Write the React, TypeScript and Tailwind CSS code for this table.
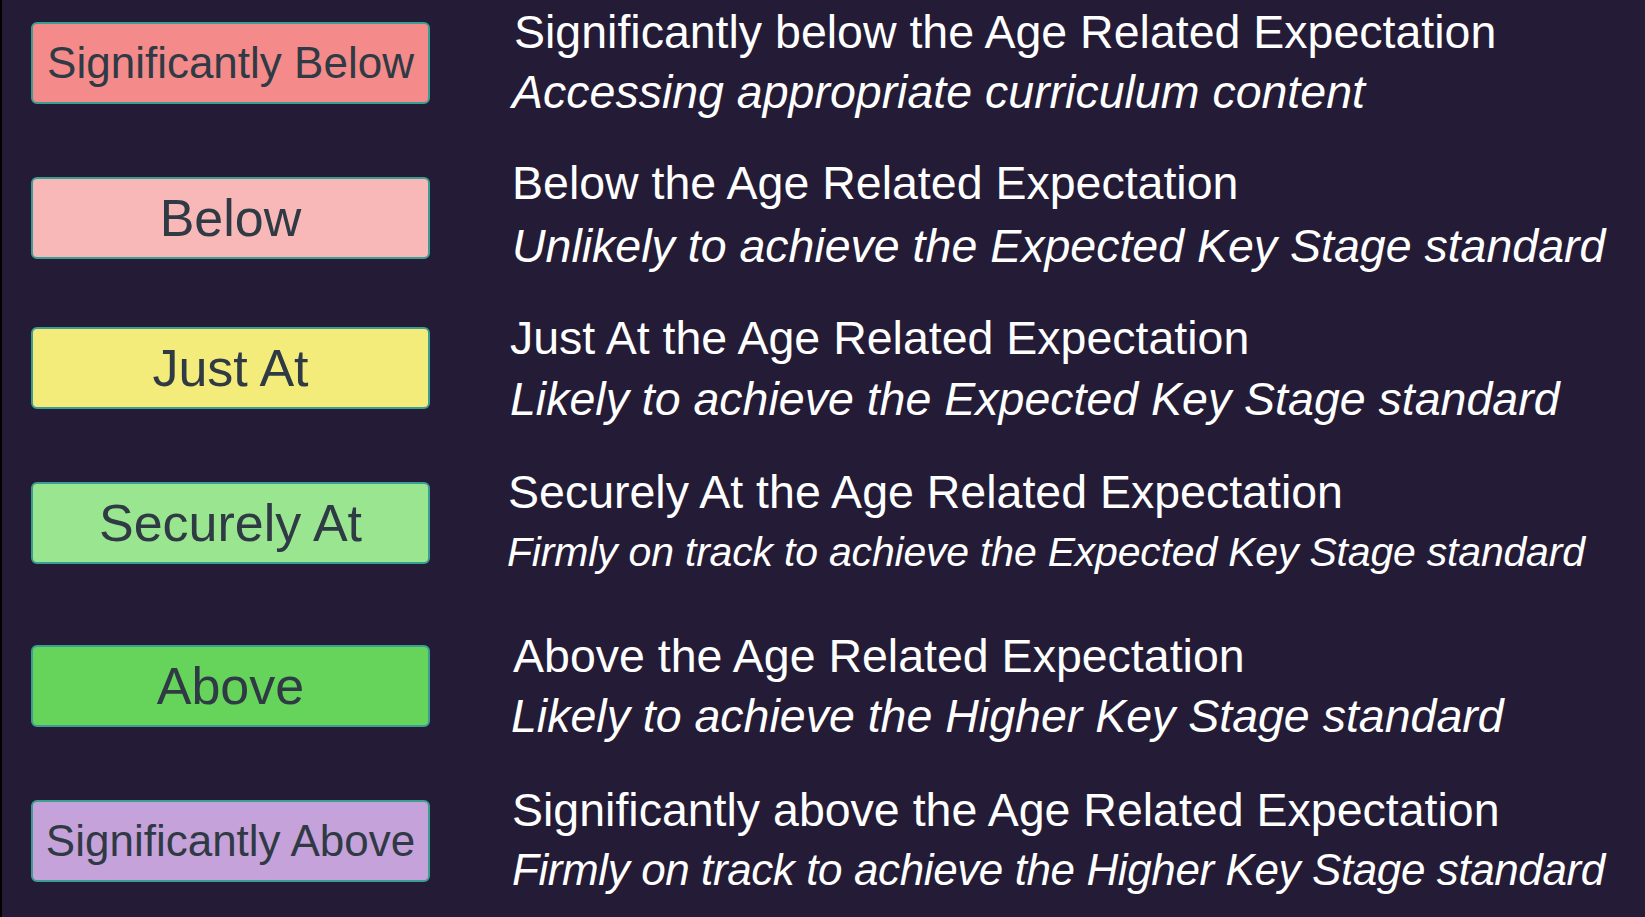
const rows = [
  {
    label: 'Significantly Below',
    labelSize: 'text-[44px]',
    box: 'bg-[#f48b8a]',
    rowH: 'h-[151px]',
    boxMt: 'mt-[20px]',
    title: 'Significantly below the Age Related Expectation',
    titleCls: 'ml-[4px]',
    sub: 'Accessing appropriate curriculum content',
    subCls: 'ml-[2px] text-[46.5px]',
  },
  {
    label: 'Below',
    labelSize: 'text-[52px]',
    box: 'bg-[#f8b8b8]',
    rowH: 'h-[155px]',
    boxMt: 'mt-[24px]',
    title: 'Below the Age Related Expectation',
    titleCls: 'ml-[2px]',
    sub: 'Unlikely to achieve the Expected Key Stage standard',
    subCls: 'ml-[2px] mt-[3px] text-[46.5px]',
  },
  {
    label: 'Just At',
    labelSize: 'text-[52px]',
    box: 'bg-[#f3ec7a]',
    rowH: 'h-[154px]',
    boxMt: 'mt-[19px]',
    title: 'Just At the Age Related Expectation',
    titleCls: 'ml-[0px]',
    sub: 'Likely to achieve the Expected Key Stage standard',
    subCls: 'ml-[0px] mt-[1px] text-[46.5px]',
  },
  {
    label: 'Securely At',
    labelSize: 'text-[52px]',
    box: 'bg-[#9ae690]',
    rowH: 'h-[164px]',
    boxMt: 'mt-[20px]',
    title: 'Securely At the Age Related Expectation',
    titleCls: 'ml-[-2px]',
    sub: 'Firmly on track to achieve the Expected Key Stage standard',
    subCls: 'ml-[-3px] text-[41px] tracking-[-0.2px]',
  },
  {
    label: 'Above',
    labelSize: 'text-[52px]',
    box: 'bg-[#66d35a]',
    rowH: 'h-[154px]',
    boxMt: 'mt-[19px]',
    title: 'Above the Age Related Expectation',
    titleCls: 'ml-[3px]',
    sub: 'Likely to achieve the Higher Key Stage standard',
    subCls: 'ml-[1px] text-[46.5px]',
  },
  {
    label: 'Significantly Above',
    labelSize: 'text-[44px]',
    box: 'bg-[#c6a2da]',
    rowH: 'h-[135px]',
    boxMt: 'mt-[20px]',
    title: 'Significantly above the Age Related Expectation',
    titleCls: 'ml-[2px]',
    sub: 'Firmly on track to achieve the Higher Key Stage standard',
    subCls: 'ml-[2px] text-[44px] tracking-[-0.4px]',
  },
];

export default function App() {
  return (
    <div
      className="w-[1645px] h-[917px] overflow-hidden bg-[#241c36] border-l-2 border-black pl-[29px] pt-[2px]"
      style={{ fontFamily: '"Liberation Sans", Arial, sans-serif' }}
    >
      {rows.map((r) => (
        <div key={r.label} className={`flex items-start ${r.rowH}`}>
          <div
            className={`${r.boxMt} ${r.box} w-[399px] h-[82px] shrink-0 rounded-[6px] border-2 border-[#3b9e92] flex items-center justify-center`}
          >
            <span className={`${r.labelSize} leading-none text-[#2f3a44] whitespace-nowrap`}>{r.label}</span>
          </div>
          <div className="ml-[80px] flex flex-col text-white whitespace-nowrap">
            <div className={`text-[46.5px] leading-[60px] ${r.titleCls}`}>{r.title}</div>
            <div className={`italic leading-[60px] ${r.subCls}`}>{r.sub}</div>
          </div>
        </div>
      ))}
    </div>
  );
}
